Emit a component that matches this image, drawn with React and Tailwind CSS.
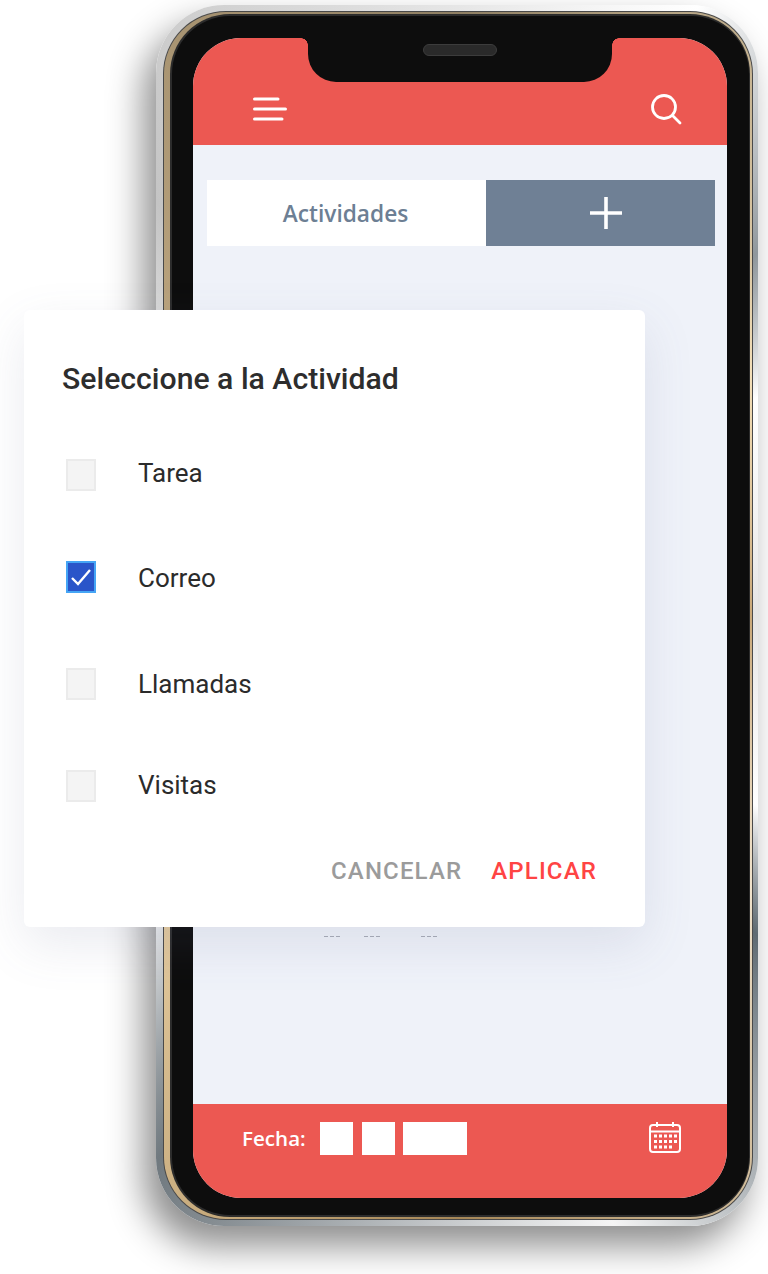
import React from 'react';

const rows = [
    { label: 'Tarea', top: 'mt-[59px]', box: 'translate-y-[2px]' },
    { label: 'Correo', top: 'mt-[73px]', box: '-translate-y-px', checked: true },
    { label: 'Llamadas', top: 'mt-[74px]', box: '' },
    { label: 'Visitas', top: 'mt-[69px]', box: 'translate-y-px' },
];

const MenuIcon = () => (
    <svg className="mb-[4px]" width="34" height="24" viewBox="0 0 34 24" fill="none" stroke="white" strokeWidth="3" strokeLinecap="round">
        <path d="M1.5 2H25" />
        <path d="M1.5 12H32.5" />
        <path d="M1.5 22H29" />
    </svg>
);

const SearchIcon = () => (
    <svg width="32" height="32" viewBox="0 0 32 32" fill="none" stroke="white" strokeWidth="2.8" strokeLinecap="round">
        <circle cx="14" cy="14" r="11.5" />
        <path d="M22.5 22.5L30 30" />
    </svg>
);

const CalendarIcon = () => (
    <svg width="32" height="32" viewBox="0 0 32 32" fill="none" stroke="white" strokeWidth="2">
        <rect x="1" y="4" width="30" height="27" rx="3" />
        <path d="M1 10.5H31" />
        <path d="M8 1V6" />
        <path d="M24 1V6" />
        <g fill="white" stroke="none">
            {[5, 10, 15, 20, 25].map((x) => (
                <React.Fragment key={x}>
                    <rect x={x} y="13.5" width="3" height="3" />
                    <rect x={x} y="19" width="3" height="3" />
                    {x < 25 && <rect x={x} y="24.5" width="3" height="3" />}
                </React.Fragment>
            ))}
        </g>
    </svg>
);

const Dashes = () => (
    <div className="flex gap-[2px]">
        <span className="w-[4px] h-px bg-[#a9adb8]" />
        <span className="w-[4px] h-px bg-[#a9adb8]" />
        <span className="w-[4px] h-px bg-[#a9adb8]" />
    </div>
);

const Phone = () => (
    <div className="ml-[156px] mt-[4px] w-[602px] h-[1221px] rounded-[68px] pl-[7px] pr-[5px] pt-[6px] pb-[6px] bg-[conic-gradient(#e6e6e6,#ffffff_6%,#8f979c_11%,#ffffff_15%,#e4e4e4_25%,#ffffff_34%,#5e6a72_38%,#f5f5f5_46%,#70797f_58%,#ffffff_63%,#dcdcdc_72%,#f6f6f6_84%,#c4c4c4_90%,#e6e6e6)] shadow-[-12px_20px_36px_rgba(0,0,0,0.45)]">
        <div className="w-full h-full rounded-[63px] p-px bg-[#4a4a4a]">
            <div className="w-full h-full rounded-[62px] pl-[6px] pr-[2px] pt-[2px] pb-[2px] bg-[conic-gradient(#8f7f63,#f3dfb8_14%,#c9a878_25%,#f0e3cc_37%,#a68757_50%,#e9d0a4_63%,#7a6e5c_75%,#b9a27c_88%,#8f7f63)]">
                <div className="w-full h-full rounded-[60px] pl-[2px] pr-px pt-[2px] pb-[2px] bg-[#2c2c2c]">
                    <div className="w-full h-full rounded-[58px] pl-[21px] pr-[22px] pt-[22px] pb-[17px] bg-[#0d0d0d]">
                        <div className="relative w-[534px] h-[1160px] rounded-[48px] overflow-hidden flex flex-col bg-[#eff2f9]">
                            <div className="absolute left-[115px] top-0 w-[304px] h-[44px] rounded-b-[28px] bg-[#0d0d0d] flex justify-center pt-[6px]">
                                <div className="absolute -left-[7px] top-0 w-[7px] h-[7px] bg-[radial-gradient(circle_at_0_100%,#ec5852_6.5px,#0d0d0d_7px)]" />
                                <div className="absolute -right-[7px] top-0 w-[7px] h-[7px] bg-[radial-gradient(circle_at_100%_100%,#ec5852_6.5px,#0d0d0d_7px)]" />
                                <div className="w-[74px] h-[12px] rounded-full bg-[#2a2a2a] border border-[#3c3c3c]" />
                            </div>

                            <header className="h-[107px] shrink-0 bg-[#ec5852] flex items-end justify-between pl-[60px] pr-[45px] pb-[20px]">
                                <MenuIcon />
                                <SearchIcon />
                            </header>

                            <main className="flex-1 px-[14px] pt-[35px]">
                                <div className="flex h-[66px] w-[508px]">
                                    <div className="w-[279px] bg-white flex items-center justify-center pr-[2px] pt-[2px] font-['Open_Sans',sans-serif] font-semibold text-[22.7px] text-[#6d7f94]">
                                        Actividades
                                    </div>
                                    <div className="flex-1 bg-[#6f8095] flex items-center justify-center pl-[10px]">
                                        <svg width="32" height="32" viewBox="0 0 32 32" stroke="white" strokeWidth="3.6">
                                            <path d="M16 0V32" />
                                            <path d="M0 16H32" />
                                        </svg>
                                    </div>
                                </div>
                                <div className="flex mt-[690px] ml-[117px]">
                                    <Dashes />
                                    <div className="ml-[24px]"><Dashes /></div>
                                    <div className="ml-[41px]"><Dashes /></div>
                                </div>
                            </main>

                            <footer className="h-[94px] shrink-0 bg-[#ec5852] flex items-start justify-between pl-[49px] pr-[46px] pt-[17px]">
                                <div className="flex items-center h-[34px]">
                                    <span className="font-['Open_Sans',sans-serif] font-semibold text-[20.6px] text-white mr-[14px]">Fecha:</span>
                                    <div className="w-[33px] h-[33px] bg-white" />
                                    <div className="w-[33px] h-[33px] bg-white ml-[9px]" />
                                    <div className="w-[64px] h-[33px] bg-white ml-[8px]" />
                                </div>
                                <CalendarIcon />
                            </footer>
                        </div>
                    </div>
                </div>
            </div>
        </div>
    </div>
);

const App = () => {
    return (
        <div className="relative w-[768px] h-[1274px] overflow-hidden bg-white pt-px font-['Roboto',sans-serif]">
            <Phone />

            <div className="absolute left-[24px] top-[310px] w-[621px] h-[617px] rounded-[6px] bg-white shadow-[0_18px_50px_rgba(90,100,140,0.13)] pl-[38px] pr-[48px] pt-[50px]">
                <h2 className="text-[30.2px] leading-[38px] font-medium text-[#2d2d2d]">Seleccione a la Actividad</h2>

                {rows.map((row) => (
                    <div key={row.label} className={`flex items-center h-[32px] ${row.top}`}>
                        {row.checked ? (
                            <div className={`ml-[4px] w-[30px] h-[32px] bg-[#2a55c9] border-2 border-[#45a5f5] flex items-center justify-center ${row.box}`}>
                                <svg width="22" height="18" viewBox="0 0 22 18" fill="none" stroke="white" strokeWidth="2.4">
                                    <path d="M2 10L8 16L20 2" />
                                </svg>
                            </div>
                        ) : (
                            <div className={`ml-[4px] w-[30px] h-[32px] bg-[#f4f4f4] border-2 border-[#ebebeb] ${row.box}`} />
                        )}
                        <span className="ml-[42px] text-[26px] text-[#2b2b2b]">{row.label}</span>
                    </div>
                ))}

                <div className="flex justify-end items-center mt-[52px] text-[24px] font-medium tracking-[1.15px]">
                    <span className="text-[#9b9b9b]">CANCELAR</span>
                    <span className="ml-[29px] text-[#ff4444]">APLICAR</span>
                </div>
            </div>
        </div>
    );
};

export default App;
